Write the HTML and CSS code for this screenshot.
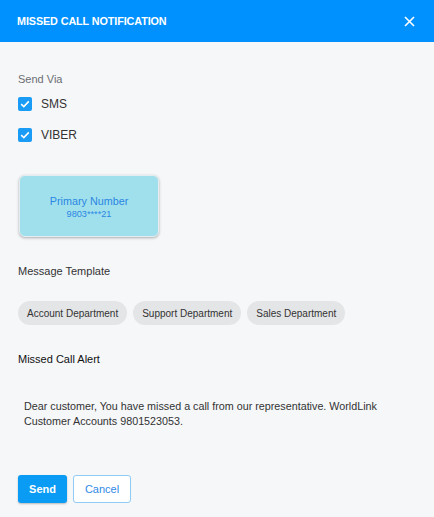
FILE: index.html
```html
<!DOCTYPE html>
<html>
<head>
<meta charset="utf-8">
<link rel="stylesheet" href="styles.css">
</head>
<body>
<div class="dialog">
  <header class="header">
    <h1 class="title">MISSED CALL NOTIFICATION</h1>
    <button class="close" aria-label="Close">
      <svg width="11" height="11" viewBox="0 0 11 11"><path d="M1 1L10 10M10 1L1 10" stroke="#fff" stroke-width="1.6" fill="none"/></svg>
    </button>
  </header>
  <main class="content">
    <div class="label-muted">Send Via</div>
    <label class="check-row">
      <span class="check"><svg width="14" height="14" viewBox="0 0 14 14"><path d="M3.2 7.2L5.8 9.6L10.8 4.4" stroke="#fff" stroke-width="1.6" fill="none"/></svg></span>
      <span class="check-text">SMS</span>
    </label>
    <label class="check-row">
      <span class="check"><svg width="14" height="14" viewBox="0 0 14 14"><path d="M3.2 7.2L5.8 9.6L10.8 4.4" stroke="#fff" stroke-width="1.6" fill="none"/></svg></span>
      <span class="check-text">VIBER</span>
    </label>
    <div class="number-card">
      <div class="number-title">Primary Number</div>
      <div class="number-value">9803****21</div>
    </div>
    <div class="section-label">Message Template</div>
    <div class="chips">
      <span class="chip">Account Department</span>
      <span class="chip">Support Department</span>
      <span class="chip">Sales Department</span>
    </div>
    <div class="alert-title">Missed Call Alert</div>
    <p class="message">Dear customer, You have missed a call from our representative. WorldLink Customer Accounts 9801523053.</p>
    <div class="actions">
      <button class="btn btn-primary">Send</button>
      <button class="btn btn-outline">Cancel</button>
    </div>
  </main>
</div>
</body>
</html>
```
FILE: styles.css
```css
* { box-sizing: border-box; }
html, body { margin: 0; padding: 0; }
body {
  background: #f6f7f9;
  font-family: "Liberation Sans", Arial, sans-serif;
  color: #333;
}
.dialog { width: 434px; min-height: 517px; background: #f6f7f9; }
.header {
  height: 42px;
  background: #0091ff;
  display: flex;
  align-items: center;
  justify-content: space-between;
  padding: 0 19px 0 17px;
}
.title {
  margin: 0;
  color: #fff;
  font-size: 10.8px;
  font-weight: bold;
  letter-spacing: -0.1px;
}
.close {
  background: none;
  border: 0;
  padding: 0;
  width: 11px;
  height: 11px;
  display: flex;
  cursor: pointer;
}
.content { padding: 30px 18px 0 18px; }
.label-muted { font-size: 11px; color: #6b6e73; line-height: 14px; }
.check-row {
  display: flex;
  align-items: center;
  gap: 9px;
  margin-top: 11px;
  height: 14px;
}
.check-row + .check-row { margin-top: 17px; }
.check {
  width: 14px;
  height: 14px;
  border-radius: 2px;
  background: #1a9bf5;
  display: flex;
}
.check-text { font-size: 12px; color: #333; }
.number-card {
  margin-top: 33px;
  margin-left: 1px;
  width: 140px;
  height: 62px;
  background: #a0e0ec;
  border: 1px solid #e4eef0;
  border-radius: 6px;
  box-shadow: 0 1px 3px rgba(0,0,0,0.3);
  display: flex;
  flex-direction: column;
  align-items: center;
  justify-content: center;
  color: #2b86e3;
  padding-top: 2px;
}
.number-title { font-size: 10.8px; line-height: 13px; }
.number-value { font-size: 9.2px; line-height: 12px; }
.section-label { margin-top: 27px; font-size: 11px; color: #333; line-height: 14px; }
.chips { display: flex; gap: 6px; margin-top: 23px; }
.chip {
  height: 24px;
  padding: 0 9px;
  border-radius: 12px;
  background: #e4e5e7;
  font-size: 10px;
  color: #333;
  display: flex;
  align-items: center;
}
.alert-title { margin-top: 27px; font-size: 11px; color: #111; line-height: 14px; }
.message {
  margin: 33px 0 0 6px;
  font-size: 10.75px;
  line-height: 15px;
  color: #333;
}
.actions { display: flex; gap: 6px; margin-top: 46px; }
.btn {
  height: 28px;
  border-radius: 3px;
  font-family: "Liberation Sans", Arial, sans-serif;
  font-size: 11px;
  cursor: pointer;
}
.btn-primary {
  width: 49px;
  background: #0a9bf5;
  color: #fff;
  border: 0;
  box-shadow: 0 1px 2px rgba(0,0,0,0.25);
  font-weight: bold;
}
.btn-outline {
  width: 58px;
  background: #fff;
  color: #2f8ae6;
  border: 1px solid #8ecbf5;
}
```
